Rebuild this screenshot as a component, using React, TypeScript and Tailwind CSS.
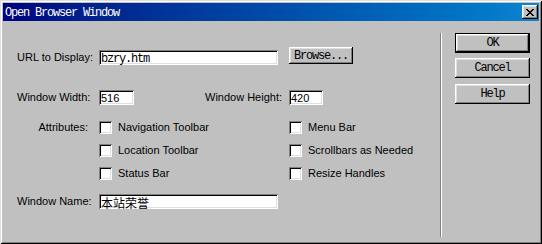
import React from "react";

const sans = { fontFamily: '"Liberation Sans", Arial, sans-serif' };
const mono = { fontFamily: '"Liberation Mono", "Courier New", monospace' };

function Check({ label }: { label: string }) {
  return (
    <div className="flex items-center h-[13px]">
      <div className="w-[13px] h-[13px] bg-white shadow-[inset_1px_1px_#808080,inset_-1px_-1px_#ffffff,inset_2px_2px_#000000,inset_-2px_-2px_#dfdfdf]" />
      <span className="ml-[6px] text-[11px] leading-[13px] text-black" style={sans}>
        {label}
      </span>
    </div>
  );
}

function Field({ w, children, serif }: { w: string; children: React.ReactNode; serif?: boolean }) {
  return (
    <div
      className={`${w} h-[15px] bg-white shadow-[inset_1px_1px_#808080,inset_-1px_-1px_#ffffff,inset_2px_2px_#000000,inset_-2px_-2px_#dfdfdf] pl-[2px] pt-[2px] flex items-center overflow-hidden text-black`}
    >
      {children}
    </div>
  );
}

function Btn({ children, def, w }: { children: React.ReactNode; def?: boolean; w: string }) {
  const inner = (
    <div className="flex-1 h-full flex items-center justify-center bg-[#c0c0c0] shadow-[inset_-1px_-1px_#000000,inset_1px_1px_#ffffff,inset_-2px_-2px_#808080,inset_2px_2px_#dfdfdf]">
      <span className="text-[12px] tracking-[-1.2px] text-black leading-none" style={mono}>
        {children}
      </span>
    </div>
  );
  return def ? (
    <div className={`${w} h-[20px] border border-black flex`}>{inner}</div>
  ) : (
    <div className={`${w} h-[20px] flex`}>{inner}</div>
  );
}

export default function App() {
  return (
    <div className="w-[542px] h-[244px] bg-[#c0c0c0] p-[3px] flex flex-col shadow-[inset_1px_1px_#dfdfdf,inset_-1px_-1px_#000000,inset_2px_2px_#ffffff,inset_-2px_-2px_#808080]">
      {/* Title bar */}
      <div className="h-[18px] flex items-center bg-gradient-to-r from-[#000080] to-[#1084d0] pl-[2px] pr-[1px]">
        <span className="flex-1 text-white text-[12px] tracking-[-1.2px] leading-none pt-[1px]" style={mono}>
          Open Browser Window
        </span>
        <div className="w-[16px] h-[14px] bg-[#c0c0c0] flex items-center justify-center shadow-[inset_-1px_-1px_#000000,inset_1px_1px_#ffffff,inset_-2px_-2px_#808080,inset_2px_2px_#dfdfdf]">
          <svg width="8" height="7" viewBox="0 0 8 7" shapeRendering="crispEdges">
            <path
              d="M0 0h2v1H0zM6 0h2v1H6zM1 1h2v1H1zM5 1h2v1H5zM2 2h4v1H2zM3 3h2v1H3zM2 4h4v1H2zM1 5h2v1H1zM5 5h2v1H5zM0 6h2v1H0zM6 6h2v1H6z"
              fill="#000"
            />
          </svg>
        </div>
      </div>

      {/* Body */}
      <div className="flex-1 flex">
        {/* Left form panel */}
        <div className="w-[437px] pl-[14px] flex flex-col text-black">
          {/* URL row */}
          <div className="mt-[26px] flex items-start h-[17px]">
            <span className="w-[82px] mt-[3px] h-[15px] leading-[15px] text-[11px]" style={sans}>
              URL to Display:
            </span>
            <div className="mt-[3px]">
              <Field w="w-[179px]">
                <span className="text-[12px] tracking-[-1.2px] leading-none" style={mono}>
                  bzry.htm
                </span>
              </Field>
            </div>
            <div className="ml-[11px]">
              <div className="w-[64px] h-[17px] flex">
                <div className="flex-1 h-full flex items-center justify-center shadow-[inset_-1px_-1px_#000000,inset_1px_1px_#ffffff,inset_-2px_-2px_#808080,inset_2px_2px_#dfdfdf]">
                  <span className="text-[12px] tracking-[-1.2px] leading-none" style={mono}>
                    Browse...
                  </span>
                </div>
              </div>
            </div>
          </div>

          {/* Size row */}
          <div className="mt-[26px] flex items-center h-[15px]">
            <span className="w-[82px] text-[11px]" style={sans}>
              Window Width:
            </span>
            <Field w="w-[35px]">
              <span className="text-[11px] leading-none" style={sans}>
                516
              </span>
            </Field>
            <span className="ml-[71px] w-[84px] text-[11px]" style={sans}>
              Window Height:
            </span>
            <Field w="w-[34px]">
              <span className="text-[11px] leading-none" style={sans}>
                420
              </span>
            </Field>
          </div>

          {/* Attributes */}
          <div className="mt-[16px] flex">
            <span className="w-[82px] pr-[11px] text-right text-[11px] leading-[13px]" style={sans}>
              Attributes:
            </span>
            <div className="w-[190px] flex flex-col gap-[10px]">
              <Check label="Navigation Toolbar" />
              <Check label="Location Toolbar" />
              <Check label="Status Bar" />
            </div>
            <div className="flex flex-col gap-[10px]">
              <Check label="Menu Bar" />
              <Check label="Scrollbars as Needed" />
              <Check label="Resize Handles" />
            </div>
          </div>

          {/* Window name */}
          <div className="mt-[14px] flex items-center h-[15px]">
            <span className="w-[82px] text-[11px]" style={sans}>
              Window Name:
            </span>
            <Field w="w-[179px]">
              <span
                className="text-[12px] leading-none"
                style={{ fontFamily: '"Noto Sans CJK SC", "Noto Sans", sans-serif' }}
              >
                本站荣誉
              </span>
            </Field>
          </div>
        </div>

        {/* Separator */}
        <div className="mt-[12px] mb-[4px] w-[2px] flex">
          <div className="w-[1px] bg-[#808080]" />
          <div className="w-[1px] bg-white" />
        </div>

        {/* Buttons */}
        <div className="pl-[13px] pt-[12px] flex flex-col">
          <Btn def w="w-[75px]">OK</Btn>
          <div className="mt-[5px]">
            <Btn w="w-[75px]">Cancel</Btn>
          </div>
          <div className="mt-[6px]">
            <Btn w="w-[75px]">Help</Btn>
          </div>
        </div>
      </div>
    </div>
  );
}
